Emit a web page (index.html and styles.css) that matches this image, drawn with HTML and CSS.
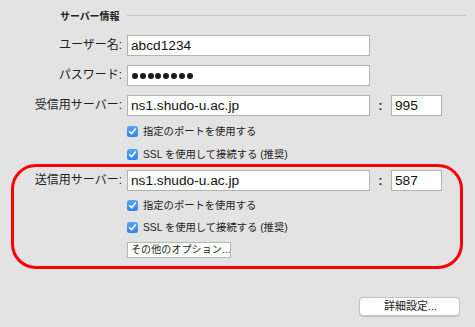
FILE: index.html
```html
<!DOCTYPE html>
<html lang="ja">
<head>
<meta charset="utf-8">
<link rel="stylesheet" href="styles.css">
</head>
<body>
<div class="pane">
  <div class="section-head">
    <span class="section-title">サーバー情報</span>
    <span class="section-rule"></span>
  </div>

  <div class="row row-user">
    <span class="label">ユーザー名:</span>
    <div class="field wide">abcd1234</div>
  </div>
  <div class="row row-pass">
    <span class="label">パスワード:</span>
    <div class="field wide dots">
      <i></i><i></i><i></i><i></i><i></i><i></i><i></i><i></i>
    </div>
  </div>
  <div class="row row-in">
    <span class="label">受信用サーバー:</span>
    <div class="field wide">ns1.shudo-u.ac.jp</div>
    <span class="colon">:</span>
    <div class="field port">995</div>
  </div>
  <div class="check check-1"><span class="box"><svg viewBox="0 0 11 11" width="11" height="11"><path d="M2.6 5.7 L4.6 7.8 L8.4 3.0" fill="none" stroke="#fff" stroke-width="1.6" stroke-linecap="round" stroke-linejoin="round"/></svg></span><span class="ctext">指定のポートを使用する</span></div>
  <div class="check check-2"><span class="box"><svg viewBox="0 0 11 11" width="11" height="11"><path d="M2.6 5.7 L4.6 7.8 L8.4 3.0" fill="none" stroke="#fff" stroke-width="1.6" stroke-linecap="round" stroke-linejoin="round"/></svg></span><span class="ctext">SSL を使用して接続する (推奨)</span></div>

  <div class="highlight">
    <div class="row row-out">
      <span class="label">送信用サーバー:</span>
      <div class="field wide">ns1.shudo-u.ac.jp</div>
      <span class="colon">:</span>
      <div class="field port">587</div>
    </div>
    <div class="check check-3"><span class="box"><svg viewBox="0 0 11 11" width="11" height="11"><path d="M2.6 5.7 L4.6 7.8 L8.4 3.0" fill="none" stroke="#fff" stroke-width="1.6" stroke-linecap="round" stroke-linejoin="round"/></svg></span><span class="ctext">指定のポートを使用する</span></div>
    <div class="check check-4"><span class="box"><svg viewBox="0 0 11 11" width="11" height="11"><path d="M2.6 5.7 L4.6 7.8 L8.4 3.0" fill="none" stroke="#fff" stroke-width="1.6" stroke-linecap="round" stroke-linejoin="round"/></svg></span><span class="ctext">SSL を使用して接続する (推奨)</span></div>
    <div class="opt-row"><span class="opt-btn">その他のオプション...</span></div>
  </div>

  <div class="footer">
    <span class="detail-btn">詳細設定...</span>
  </div>
</div>
</body>
</html>
```

FILE: styles.css
```css
html, body {
  margin: 0;
  padding: 0;
}
body {
  background: #e3e3e3;
  width: 475px;
  height: 327px;
  overflow: hidden;
  font-family: "Liberation Sans", "Noto Sans CJK JP", sans-serif;
  color: #1e1e1e;
}
.pane {
  display: flex;
  flex-direction: column;
}
.section-head {
  height: 30px;
  display: flex;
  align-items: center;
  padding-left: 60px;
  padding-right: 9px;
}
.section-title {
  font-family: "Noto Sans CJK JP", sans-serif;
  font-weight: bold;
  font-size: 10px;
  letter-spacing: -0.1px;
  width: 67px;
  line-height: 12px;
  margin-top: 2px;
  color: #222;
}
.section-rule {
  flex: 1;
  height: 1px;
  background: #c6c6c6;
}
.row {
  display: flex;
  align-items: center;
  height: 21px;
}
.row-user { margin-top: 5px; }
.row-pass { margin-top: 9px; }
.row-in { margin-top: 9px; }
.label {
  width: 122px;
  margin-right: 5px;
  text-align: right;
  font-size: 12px;
  line-height: 21px;
  white-space: nowrap;
  color: #222;
}
.field {
  box-sizing: border-box;
  height: 21px;
  background: #fff;
  border: 1px solid #b3b3b3;
  font-size: 13.7px;
  line-height: 19px;
  padding-left: 3px;
  color: #111;
  white-space: nowrap;
  overflow: hidden;
}
.wide { width: 243px; }
.port { width: 51px; }
.colon {
  width: 21px;
  text-align: center;
  font-size: 13px;
  font-weight: bold;
  color: #333;
}
.dots {
  display: flex;
  align-items: center;
  gap: 1.8px;
  padding-left: 4px;
}
.dots i {
  display: block;
  width: 6px;
  height: 6px;
  border-radius: 50%;
  background: #1a1a1a;
}
.check {
  display: flex;
  align-items: center;
  height: 11px;
  padding-left: 127px;
}
.check-1 { margin-top: 10px; }
.check-2 { margin-top: 12px; }
.box {
  box-sizing: border-box;
  width: 11px;
  height: 11px;
  border-radius: 2.5px;
  background: linear-gradient(#5aa5fb, #2f83f2);
  display: flex;
}
.box svg { display: block; }
.ctext {
  margin-left: 5px;
  font-size: 10.3px;
  line-height: 12px;
  white-space: nowrap;
  color: #222;
}
.highlight {
  margin-top: 4px;
  margin-left: 11px;
  width: 452px;
  box-sizing: border-box;
  border: 3px solid #fb0007;
  border-radius: 25px;
  padding: 3px 0 8px 0;
}
.highlight .row { margin-left: -14px; }
.highlight .label { width: 122px; }
.highlight .check { padding-left: 113px; }
.check-3 { margin-top: 9px; }
.check-4 { margin-top: 11px; }
.opt-row {
  margin-top: 9px;
  padding-left: 113px;
  display: flex;
}
.opt-btn {
  box-sizing: border-box;
  height: 16px;
  width: 104px;
  background: #fff;
  border: 1px solid #b6b6b6;
  font-size: 10px;
  line-height: 14px;
  padding-left: 3px;
  white-space: nowrap;
  color: #222;
  letter-spacing: 0.1px;
}
.footer {
  margin-top: 28px;
  display: flex;
  justify-content: flex-end;
  padding-right: 15px;
}
.detail-btn {
  box-sizing: border-box;
  width: 101px;
  height: 19px;
  background: #fff;
  border: 1px solid #c4c4c4;
  border-radius: 4px;
  box-shadow: 0 0.5px 1px rgba(0,0,0,0.15);
  font-size: 11px;
  line-height: 17px;
  text-align: center;
  color: #222;
  padding-left: 2px;
}
```
